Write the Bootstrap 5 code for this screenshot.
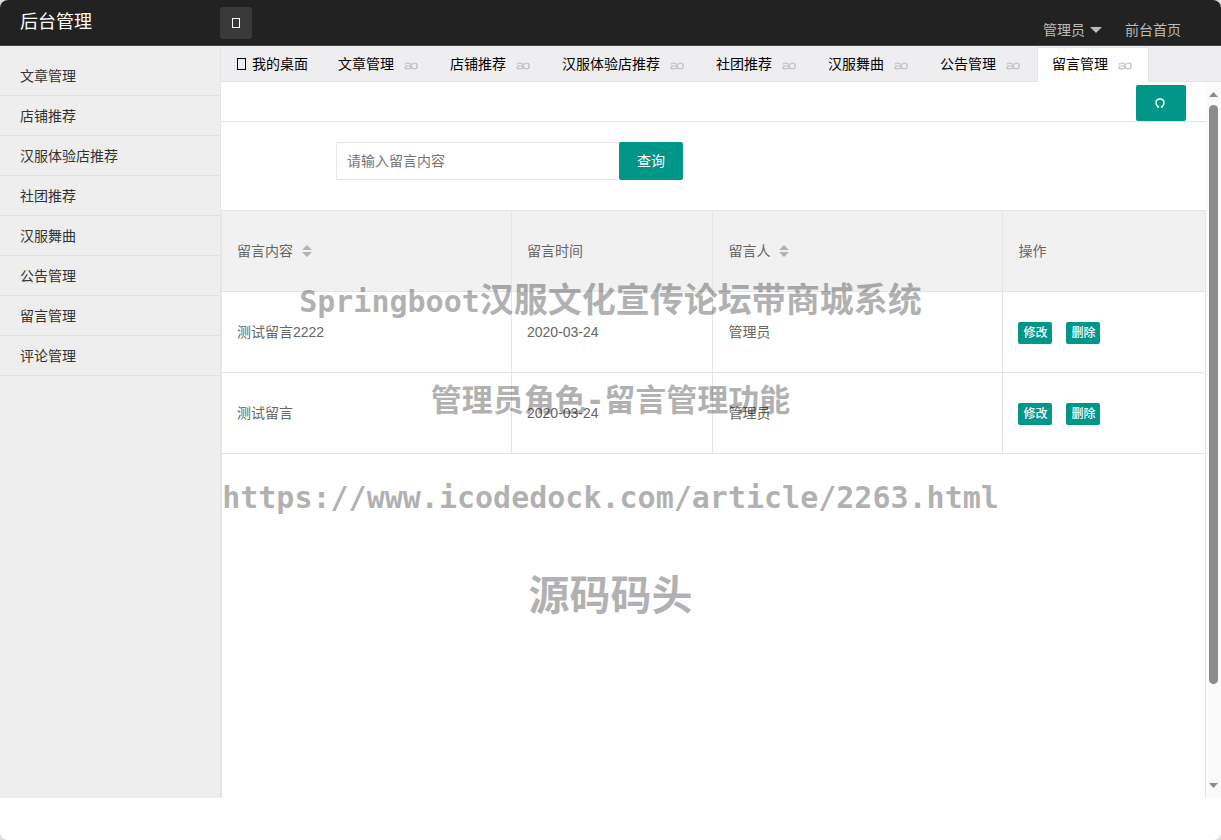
<!DOCTYPE html>
<html lang="zh-CN">
<head>
<meta charset="utf-8">
<meta name="viewport" content="width=device-width, initial-scale=1">
<title>后台管理</title>
<link href="https://cdn.jsdelivr.net/npm/bootstrap@5.3.0/dist/css/bootstrap.min.css" rel="stylesheet">
<style>
:root{--teal:#009688;--line:#e5e5e5}
body{font-family:"Liberation Sans","Noto Sans CJK SC",sans-serif;font-size:14px;line-height:20px;color:#333;background:#ddd}
a{color:inherit;text-decoration:none}
svg{display:block}
.shell{border-radius:8px;background:#fff}
.topbar{height:46px;background:#222;border-bottom:1px solid #4a4548}
.brand{width:220px;padding:0 20px;font-size:18px;line-height:24px;color:#fff;margin-top:10px}
.fold{width:32px;height:32px;margin-top:7px;background:#393939;border:0;border-radius:3px}
.usernav{gap:23px;padding-right:40px;margin-top:20px;color:#bbb}
.usernav button{border:0;padding:0;background:none;color:inherit;gap:5px}
.side{width:221px;background:#eee;border-right:1px solid var(--line);padding-top:10px}
.side a{display:block;height:40px;line-height:40px;padding:0 20px;border-bottom:1px solid #e2e2e2}
.main{min-width:0}
.tabs{height:36px;background:#eeeef0;border-bottom:1px solid var(--line)}
.tabs a{height:36px;padding:0 15px;color:#000;display:flex;align-items:center;gap:10px;white-space:nowrap}
.tabs .home{gap:5px;padding-left:16px}
.tabs .current{background:#fff;border:1px solid var(--line);border-bottom:0;padding:0 14px 2px;margin-top:1px;height:35px}
.tabs svg{margin-top:4px}
.tabs .home svg{margin-top:0}
.crumb{height:40px;padding:3px 20px 0 0;border-bottom:1px solid var(--line)}
.teal-btn{background:var(--teal);color:#fff;border:0;border-radius:2px}
.reload{width:50px;height:36px}
.search{padding:20px 0 30px 115px}
.search input{width:283px;height:38px;border:1px solid #e6e6e6;border-right:0;border-radius:2px 0 0 2px;padding:0 10px;color:#333;outline:0}
.search input::placeholder{color:#757575;opacity:1}
.search button{width:64px;height:38px}
.gridbox{border:1px solid var(--line);border-bottom:0}
.grid{table-layout:fixed;color:#666;width:100%;border-collapse:separate;border-spacing:0}
.grid th,.grid td{height:81px;padding:0 15px;font-weight:400;border-bottom:1px solid var(--line);border-right:1px solid var(--line)}
.grid th:last-child,.grid td:last-child{border-right:0}
.grid th{background:#f1f1f1}
.wide{width:29.5%}.mid{width:20.5%}
.ops{gap:14px;padding-top:2px}
.ops button{width:34px;height:22px;line-height:22px;font-size:12px;font-weight:500;padding:0}
.scroll{width:15px;background:#fafafa;padding:10px 0 10px;gap:8px}
.thumb{width:9px;height:579px;border-radius:5px;background:#8b8b8b}
.foot{height:42px}
.stamp{top:0;left:0;right:0;padding-top:276px;color:#000;opacity:.3;pointer-events:none;font-family:"DejaVu Sans Mono","Noto Sans CJK SC",monospace;font-weight:700;line-height:48px;white-space:nowrap;gap:50px}
.s34{font-size:34px}.s31{font-size:31px}.s30{font-size:30px}.s41{font-size:41px}
</style>
</head>
<body>
<svg width="0" height="0" class="position-absolute" aria-hidden="true">
  <symbol id="x" viewBox="0 0 16 10"><path d="M1 3.500Q1.500 2 3.800 2Q7.200 2 7.200 5Q7.200 8 4 8Q1 8 1 6.500Q1 5 3 5H7.200M7.200 5Q7.200 8 10.200 8Q13.200 8 13.200 5Q13.200 2 10.500 2Q8.500 2 8 3.500" fill="none" stroke="#bdbdbd" stroke-width="1.200"/></symbol>
  <symbol id="sort" viewBox="0 0 10 12"><path d="M0 5L5 0L10 5ZM0 7H10L5 12Z" fill="#b2b2b2"/></symbol>
</svg>
<div class="shell position-relative d-flex flex-column min-vh-100 overflow-hidden">
  <header class="topbar d-flex align-items-start">
    <div class="brand">后台管理</div>
    <button class="fold d-flex align-items-center justify-content-center" aria-label="菜单"><svg width="8" height="10"><rect x=".5" y=".5" width="7" height="9" fill="none" stroke="#fff"/></svg></button>
    <nav class="usernav d-flex ms-auto">
      <button class="d-flex align-items-center">管理员 <svg width="12" height="6"><path d="M0 0H12L6 6Z" fill="#bbb"/></svg></button>
      <a href="#">前台首页</a>
    </nav>
  </header>
  <div class="d-flex flex-grow-1">
    <nav class="side flex-shrink-0">
      <a href="#">文章管理</a><a href="#">店铺推荐</a><a href="#">汉服体验店推荐</a><a href="#">社团推荐</a><a href="#">汉服舞曲</a><a href="#">公告管理</a><a href="#">留言管理</a><a href="#">评论管理</a>
    </nav>
    <div class="main flex-grow-1 d-flex flex-column">
      <nav class="tabs d-flex">
        <a class="home" href="#"><svg width="10" height="12"><rect x=".5" y=".5" width="8" height="11" fill="none" stroke="#000"/></svg>我的桌面</a>
        <a href="#">文章管理<svg width="16" height="10"><use href="#x"/></svg></a>
        <a href="#">店铺推荐<svg width="16" height="10"><use href="#x"/></svg></a>
        <a href="#">汉服体验店推荐<svg width="16" height="10"><use href="#x"/></svg></a>
        <a href="#">社团推荐<svg width="16" height="10"><use href="#x"/></svg></a>
        <a href="#">汉服舞曲<svg width="16" height="10"><use href="#x"/></svg></a>
        <a href="#">公告管理<svg width="16" height="10"><use href="#x"/></svg></a>
        <a class="current" href="#">留言管理<svg width="16" height="10"><use href="#x"/></svg></a>
      </nav>
      <div class="d-flex flex-grow-1">
        <main class="main flex-grow-1 d-flex flex-column">
          <div class="crumb d-flex justify-content-end">
            <button class="teal-btn reload d-flex align-items-center justify-content-center" aria-label="刷新"><svg width="12" height="10" viewBox="0 0 12 10"><path d="M2.200 9H3.900Q1 7.500 1 4.800Q1 1 5 1Q9 1 9 4.800Q9 7.500 6.100 9H7.800" fill="none" stroke="#fff" stroke-width="1.400"/></svg></button>
          </div>
          <form class="search d-flex">
            <input type="text" placeholder="请输入留言内容" aria-label="留言内容"><button type="button" class="teal-btn">查询</button>
          </form>
          <div class="gridbox flex-grow-1">
            <table class="grid">
              <colgroup><col class="wide"><col class="mid"><col class="wide"><col></colgroup>
              <thead><tr>
                <th><div class="d-flex align-items-center gap-2"><span>留言内容</span><svg width="12" height="12"><use href="#sort"/></svg></div></th>
                <th>留言时间</th>
                <th><div class="d-flex align-items-center gap-2"><span>留言人</span><svg width="12" height="12"><use href="#sort"/></svg></div></th>
                <th>操作</th>
              </tr></thead>
              <tbody>
                <tr><td>测试留言2222</td><td>2020-03-24</td><td>管理员</td><td><div class="ops d-flex"><button class="teal-btn">修改</button><button class="teal-btn">删除</button></div></td></tr>
                <tr><td>测试留言</td><td>2020-03-24</td><td>管理员</td><td><div class="ops d-flex"><button class="teal-btn">修改</button><button class="teal-btn">删除</button></div></td></tr>
              </tbody>
            </table>
          </div>
        </main>
        <div class="scroll d-flex flex-column flex-shrink-0 align-items-center" aria-hidden="true">
          <svg width="9" height="5"><path d="M0 5L4.500 0L9 5Z" fill="#8b8b8b"/></svg>
          <div class="thumb"></div>
          <svg class="mt-auto" width="9" height="5"><path d="M0 0H9L4.500 5Z" fill="#8b8b8b"/></svg>
        </div>
      </div>
    </div>
  </div>
  <div class="foot"></div>
  <div class="stamp position-absolute d-flex flex-column align-items-center">
    <div class="s34"><span class="s30">Springboot</span>汉服文化宣传论坛带商城系统</div>
    <div class="s31">管理员角色-留言管理功能</div>
    <div class="s30">https://www.icodedock.com/article/2263.html</div>
    <div class="s41">源码码头</div>
  </div>
</div>
<script src="https://cdn.jsdelivr.net/npm/bootstrap@5.3.0/dist/js/bootstrap.bundle.min.js"></script>
</body>
</html>
